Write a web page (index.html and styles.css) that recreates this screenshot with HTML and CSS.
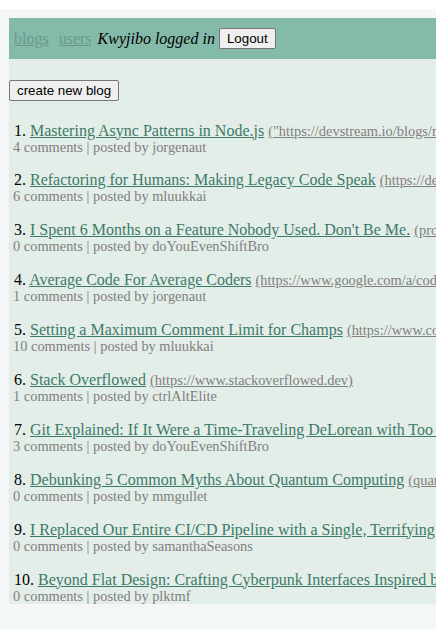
FILE: index.html
```html
<!DOCTYPE html>
<html>
<head>
<meta charset="utf-8">
<link rel="stylesheet" href="styles.css">
</head>
<body>
<div class="page">
  <div class="app">
    <div class="nav">
      <a class="nav-link" href="#">blogs</a>
      <a class="nav-link" href="#">users</a>
      <em class="user">Kwyjibo logged in</em>
      <button class="btn">Logout</button>
    </div>
    <div class="content">
      <div class="toolbar"><button class="btn">create new blog</button></div>
      <div class="blogs">
        <div class="blog">
          <div class="title-line"><span class="num">1.</span> <a class="title" href="#">Mastering Async Patterns in Node.js</a> <a class="url" href="#">("https://devstream.io/blogs/mastering-async-patterns")</a></div>
          <div class="meta">4 comments | posted by jorgenaut</div>
        </div>
        <div class="blog">
          <div class="title-line"><span class="num">2.</span> <a class="title" href="#">Refactoring for Humans: Making Legacy Code Speak</a> <a class="url" href="#">(https://devstream.io/blogs/refactoring-for-humans)</a></div>
          <div class="meta">6 comments | posted by mluukkai</div>
        </div>
        <div class="blog">
          <div class="title-line"><span class="num">3.</span> <a class="title" href="#">I Spent 6 Months on a Feature Nobody Used. Don't Be Me.</a> <a class="url" href="#">(productlessons.blog/feature)</a></div>
          <div class="meta">0 comments | posted by doYouEvenShiftBro</div>
        </div>
        <div class="blog">
          <div class="title-line"><span class="num">4.</span> <a class="title" href="#">Average Code For Average Coders</a> <a class="url" href="#">(https://www.google.com/a/codeforcoders)</a></div>
          <div class="meta">1 comments | posted by jorgenaut</div>
        </div>
        <div class="blog">
          <div class="title-line"><span class="num">5.</span> <a class="title" href="#">Setting a Maximum Comment Limit for Champs</a> <a class="url" href="#">(https://www.commentlimits.dev)</a></div>
          <div class="meta">10 comments | posted by mluukkai</div>
        </div>
        <div class="blog">
          <div class="title-line"><span class="num">6.</span> <a class="title" href="#">Stack Overflowed</a> <a class="url" href="#">(https://www.stackoverflowed.dev)</a></div>
          <div class="meta">1 comments | posted by ctrlAltElite</div>
        </div>
        <div class="blog">
          <div class="title-line"><span class="num">7.</span> <a class="title" href="#">Git Explained: If It Were a Time-Traveling DeLorean with Too Many Buttons</a> <a class="url" href="#">(https://gitexplained.dev)</a></div>
          <div class="meta">3 comments | posted by doYouEvenShiftBro</div>
        </div>
        <div class="blog">
          <div class="title-line"><span class="num">8.</span> <a class="title" href="#">Debunking 5 Common Myths About Quantum Computing</a> <a class="url" href="#">(quantummyths.io)</a></div>
          <div class="meta">0 comments | posted by mmgullet</div>
        </div>
        <div class="blog">
          <div class="title-line"><span class="num">9.</span> <a class="title" href="#">I Replaced Our Entire CI/CD Pipeline with a Single, Terrifying Bash Script</a> <a class="url" href="#">(https://bashpipelines.dev)</a></div>
          <div class="meta">0 comments | posted by samanthaSeasons</div>
        </div>
        <div class="blog">
          <div class="title-line"><span class="num">10.</span> <a class="title" href="#">Beyond Flat Design: Crafting Cyberpunk Interfaces Inspired by Blade Runner</a> <a class="url" href="#">(https://cyberpunkui.dev)</a></div>
          <div class="meta">0 comments | posted by plktmf</div>
        </div>
      </div>
    </div>
  </div>
</div>
</body>
</html>
```

FILE: styles.css
```css
html, body {
  margin: 0;
  padding: 0;
  background: #ffffff;
  overflow: hidden;
}

body {
  font-family: "Liberation Serif", "Times New Roman", serif;
  font-size: 16px;
}

.page {
  margin-top: 9px;
  background: #f3f7f7;
  padding: 9px 0 0 9px;
  min-height: 620px;
  box-sizing: border-box;
}

.app {
  background: #e4eee8;
}

.nav {
  background: #84baa9;
  padding: 10px 5px;
  display: flex;
  align-items: center;
  white-space: nowrap;
  height: 21px;
}

.nav-link {
  color: #6a9a8a;
  margin-right: 10px;
  font-size: 16px;
}

.nav-link + .nav-link {
  margin-right: 6px;
}

.user {
  color: #000;
  margin-right: 4px;
}

.btn {
  font-family: "Liberation Sans", Arial, sans-serif;
  font-size: 13.33px;
  padding: 1px 7px;
  border: 1px solid #767676;
  border-radius: 2px;
  background: #efefef;
  color: #000;
  height: 21px;
}

.content {
  padding: 21px 0 0.5px 0;
}

.toolbar {
  margin-bottom: 20.5px;
}

.blogs {
  padding-left: 5px;
  white-space: nowrap;
}

.blog + .blog {
  margin-top: 16.9px;
}

.title-line {
  line-height: 17px;
}

.num {
  color: #000;
}

.title {
  color: #3d7a68;
}

.url {
  color: #808080;
  font-size: 14.4px;
  line-height: 14px;
}

.meta {
  color: #808080;
  font-size: 14.4px;
  line-height: 16px;
  margin-left: -1px;
}
```
